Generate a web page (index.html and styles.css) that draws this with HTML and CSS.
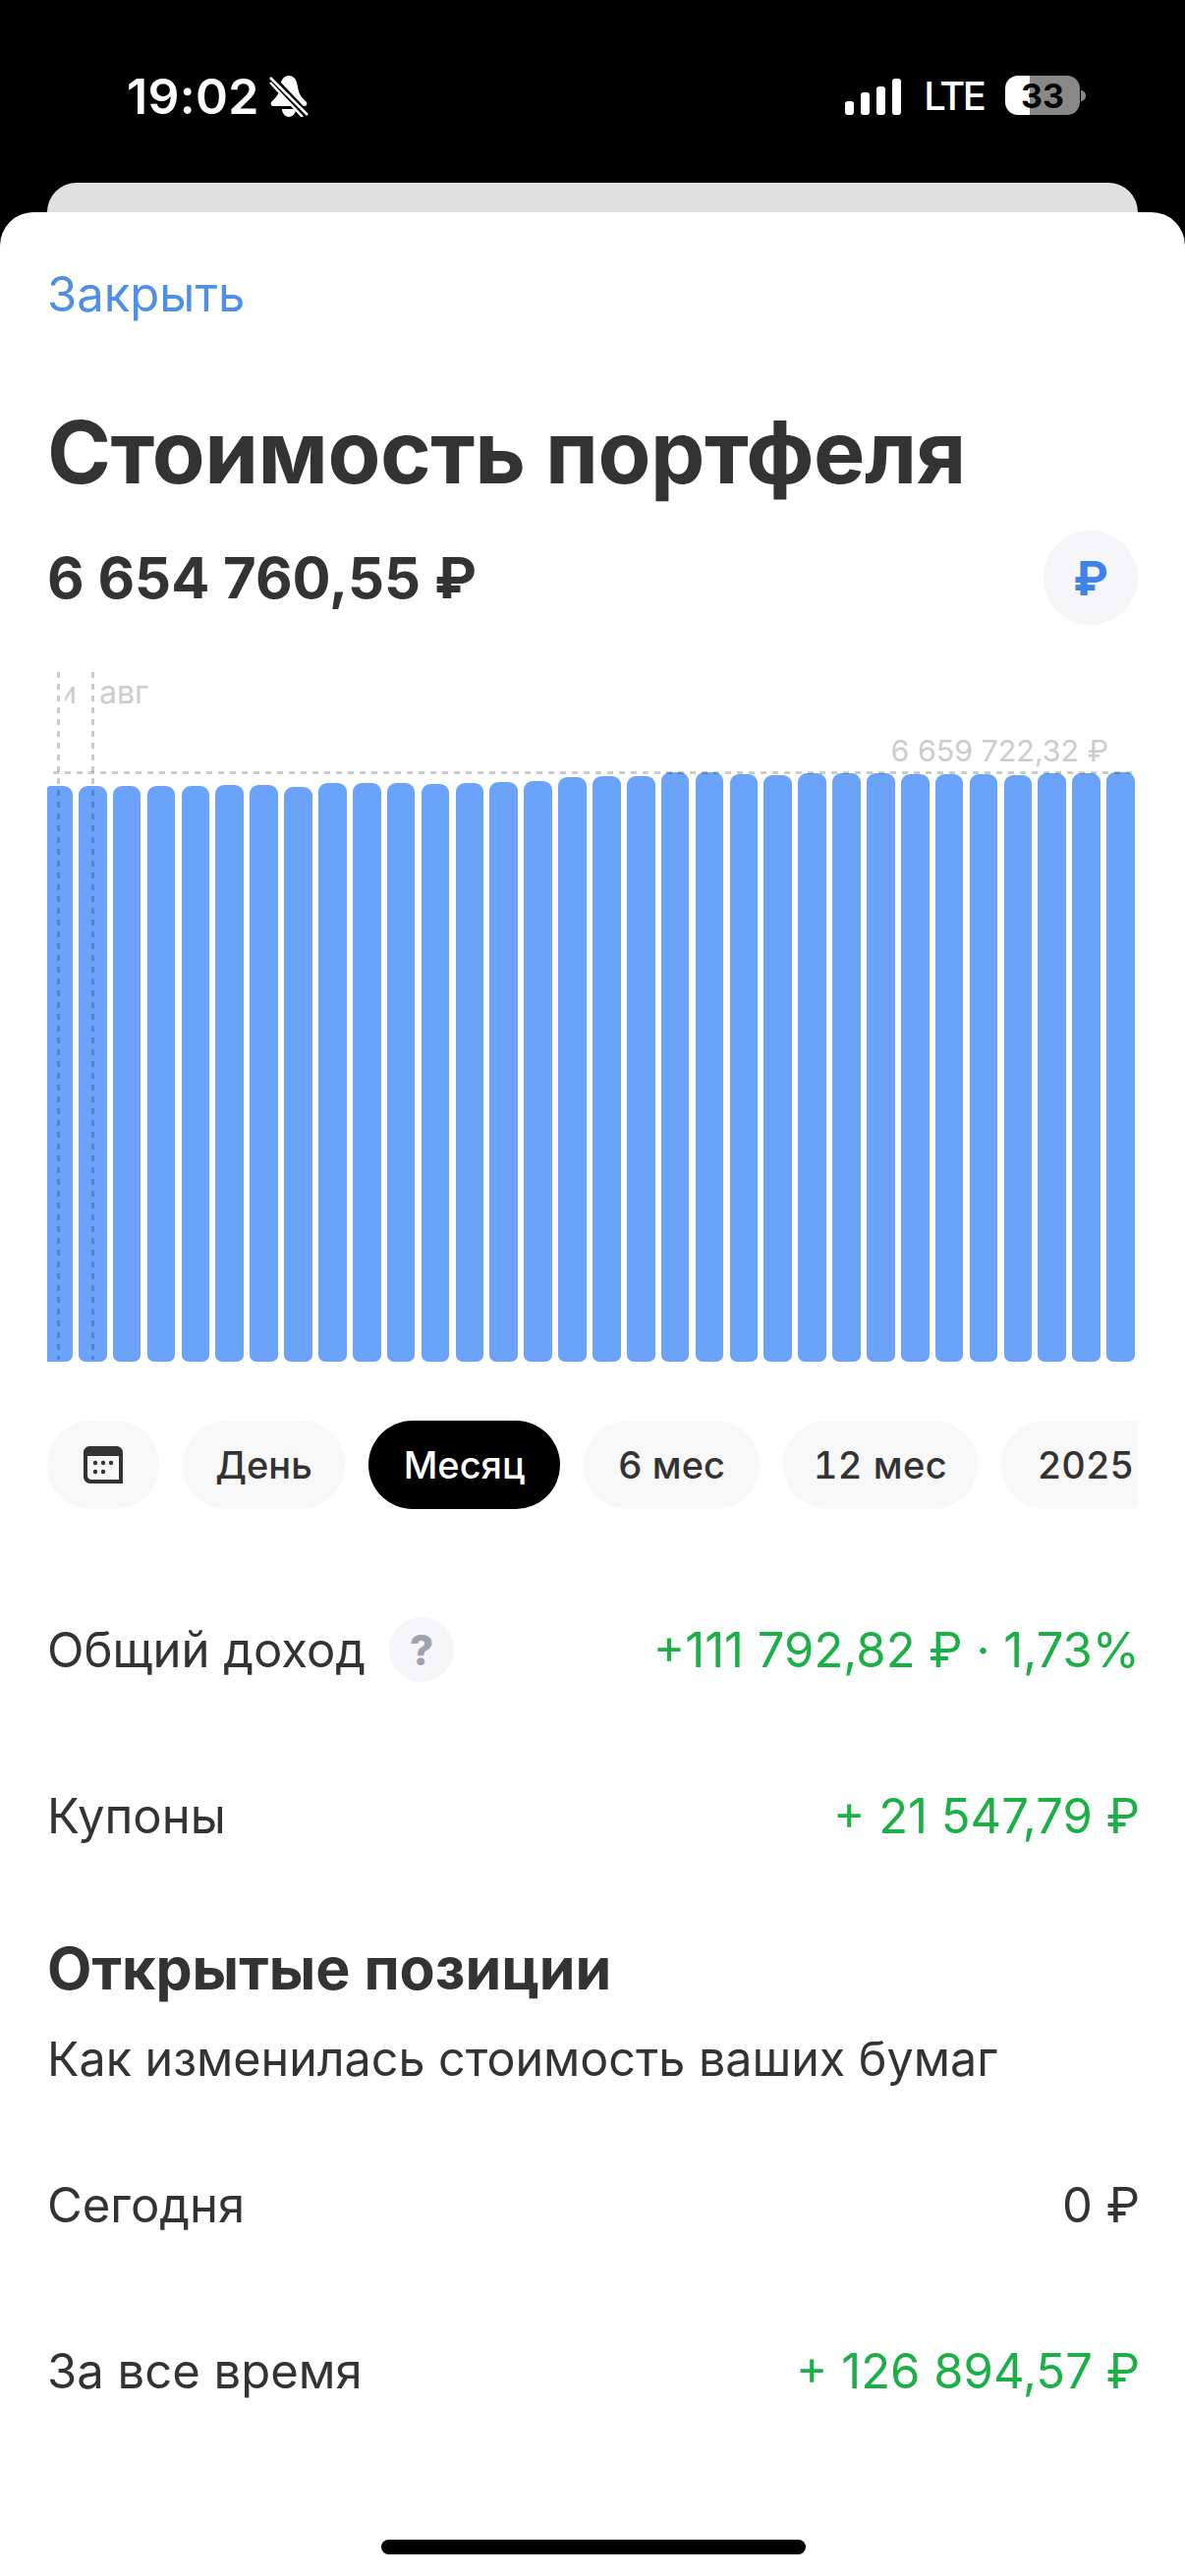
FILE: index.html
```html
<!DOCTYPE html>
<html lang="ru">
  <head>
    <meta charset="utf-8">
    <link rel="stylesheet" href="styles.css">
  </head>
  <body>
    <div class="status-bar">
      <div class="status-left">
        <span class="status-time">19:02</span>
        <svg class="bell-icon" width="40" height="42" viewBox="0 0 40 42">
          <path d="M20 0c4 0 7 3 8 7l2 9c1 4 5 8 8 11 1 2 0 4-2 4H4c-2 0-3-2-2-4 3-3 7-7 8-11l2-9c1-4 4-7 8-7z" fill="#fff"/>
          <path d="M13 34h14c0 4-3 8-7 8s-7-4-7-8z" fill="#fff"/>
          <path d="M1 2l37 39" stroke="#000" stroke-width="9"/>
          <path d="M1 2l38 38M1 7l33 35" stroke="#fff" stroke-width="2.5"/>
        </svg>
      </div>
      <div class="status-right">
        <div class="signal">
          <i class="signal-1"></i>
          <i class="signal-2"></i>
          <i class="signal-3"></i>
          <i class="signal-4"></i>
        </div>
        <span class="status-lte">LTE</span>
        <div class="battery"><span class="battery-level">33</span></div>
        <i class="battery-nub"></i>
      </div>
    </div>
    <div class="back-card"></div>
    <div class="sheet">
      <div class="close-link">Закрыть</div>
      <h1 class="sheet-title">Стоимость портфеля</h1>
      <div class="amount-row">
        <span class="amount">6 654 760,55 ₽</span>
        <span class="currency-button">₽</span>
      </div>

      <div class="chart">
        <div class="bar bar-first" style="height: 586px"></div>
        <div class="bar" style="height: 586px"></div>
        <div class="bar" style="height: 586px"></div>
        <div class="bar" style="height: 586px"></div>
        <div class="bar" style="height: 586px"></div>
        <div class="bar" style="height: 587px"></div>
        <div class="bar" style="height: 587px"></div>
        <div class="bar" style="height: 585px"></div>
        <div class="bar" style="height: 589px"></div>
        <div class="bar" style="height: 589px"></div>
        <div class="bar" style="height: 589px"></div>
        <div class="bar" style="height: 588px"></div>
        <div class="bar" style="height: 589px"></div>
        <div class="bar" style="height: 590px"></div>
        <div class="bar" style="height: 591px"></div>
        <div class="bar" style="height: 595px"></div>
        <div class="bar" style="height: 596px"></div>
        <div class="bar" style="height: 596px"></div>
        <div class="bar" style="height: 600px"></div>
        <div class="bar" style="height: 600px"></div>
        <div class="bar" style="height: 598px"></div>
        <div class="bar" style="height: 597px"></div>
        <div class="bar" style="height: 599px"></div>
        <div class="bar" style="height: 599px"></div>
        <div class="bar" style="height: 599px"></div>
        <div class="bar" style="height: 598px"></div>
        <div class="bar" style="height: 598px"></div>
        <div class="bar" style="height: 598px"></div>
        <div class="bar" style="height: 597px"></div>
        <div class="bar" style="height: 599px"></div>
        <div class="bar" style="height: 599px"></div>
        <div class="bar" style="height: 600px"></div>

        <i class="grid-line grid-line-july"></i>
        <i class="grid-line grid-line-aug"></i>
        <i class="max-line"></i>
        <span class="chart-label label-july"><span>и</span></span>
        <span class="chart-label label-aug">авг</span>
        <span class="chart-label label-max">6 659 722,32 ₽</span>
      </div>

      <div class="periods">
        <div class="pill pill-icon">
          <svg width="40" height="38" viewBox="0 0 40 38">
            <path d="M6 0h28c3 0 6 3 6 6v32H7c-4 0-7-3-7-7V6c0-3 3-6 6-6z" fill="#333"/>
            <path d="M4 10h32v24H8c-2 0-4-2-4-4z" fill="#f8f8f8"/>
            <circle cx="12" cy="17" r="2.2" fill="#333"/>
            <circle cx="20" cy="17" r="2.2" fill="#333"/>
            <circle cx="28" cy="17" r="2.2" fill="#333"/>
            <circle cx="12" cy="26" r="2.2" fill="#333"/>
            <circle cx="20" cy="26" r="2.2" fill="#333"/>
          </svg>
        </div>
        <div class="pill pill-day">День</div>
        <div class="pill pill-month pill-active">Месяц</div>
        <div class="pill pill-half">6 мес</div>
        <div class="pill pill-year">12 мес</div>
        <div class="pill pill-date">2025</div>
      </div>

      <div class="stats stats-income">
        <div class="stat-row">
          <div class="stat-label">
            <span>Общий доход</span>
            <span class="help-button">?</span>
          </div>
          <span class="stat-value positive">+111 792,82 ₽ · 1,73%</span>
        </div>
        <div class="stat-row">
          <span>Купоны</span>
          <span class="stat-value positive">+ 21 547,79 ₽</span>
        </div>
      </div>

      <h2 class="section-title">Открытые позиции</h2>
      <p class="section-text">Как изменилась стоимость ваших бумаг</p>

      <div class="stats stats-positions">
        <div class="stat-row">
          <span>Сегодня</span>
          <span class="stat-value">0 ₽</span>
        </div>
        <div class="stat-row">
          <span>За все время</span>
          <span class="stat-value positive">+ 126 894,57 ₽</span>
        </div>
      </div>

      <div class="home-indicator"></div>
    </div>
  </body>
</html>
```

FILE: styles.css
```css
:root {
  --text-color: #333333;
  --muted-color: #cccccc;
  --link-color: #4f8fe6;
  --accent-color: #3f82ea;
  --bar-color: #6ba3fb;
  --pill-bg: #f8f8f8;
  --circle-bg: #f6f6f8;
  --green-color: #1bb045;
}

* {
  box-sizing: border-box;
}

html,
body {
  margin: 0;
  height: 2622px;
  overflow: hidden;
}

body {
  display: flex;
  flex-direction: column;
  background-color: #000000;
  color: var(--text-color);
  font-family: Inter, "Noto Sans", sans-serif;
}

.status-bar {
  height: 186px;
  padding: 77px 101px 0 129px;
  display: flex;
  justify-content: space-between;
  align-items: flex-start;
  color: #ffffff;
}

.status-left {
  display: flex;
  align-items: center;
  gap: 10px;
  height: 42px;
}

.status-time {
  font-size: 50px;
  font-weight: 600;
  letter-spacing: 0.3px;
}

.status-right {
  display: flex;
  align-items: center;
  height: 40px;
}

.signal {
  display: flex;
  align-items: flex-end;
  gap: 7px;
  height: 37px;
  margin-top: 2px;
}

.signal i {
  display: block;
  width: 9px;
  border-radius: 3px;
  background-color: #ffffff;
}

.signal-1 {
  height: 14px;
}

.signal-2 {
  height: 23px;
}

.signal-3 {
  height: 29px;
}

.signal-4 {
  height: 37px;
}

.status-lte {
  margin-left: 23px;
  font-size: 40px;
  font-weight: 500;
  letter-spacing: -2.8px;
}

.battery {
  width: 76px;
  height: 40px;
  margin-left: 22px;
  display: flex;
  align-items: center;
  justify-content: center;
  border-radius: 13px;
  background: linear-gradient(to right, #ffffff 33%, #888888 33%);
}

.battery-level {
  color: #000000;
  font-size: 34px;
  font-weight: 700;
}

.battery-nub {
  display: block;
  width: 5px;
  height: 11px;
  margin-left: 1px;
  border-radius: 0 5px 5px 0;
  background-color: #888888;
}

.back-card {
  height: 60px;
  margin: 0 48px -30px;
  border-radius: 30px 30px 0 0;
  background-color: #e0e0e0;
}

.sheet {
  position: relative;
  flex: 1;
  display: flex;
  flex-direction: column;
  padding: 54px 48px 0;
  border-radius: 34px 34px 0 0;
  background-color: #ffffff;
}

.close-link {
  height: 60px;
  line-height: 60px;
  font-size: 49px;
  color: var(--link-color);
}

.sheet-title {
  height: 100px;
  margin: 80px 0 0;
  line-height: 100px;
  font-size: 88px;
  font-weight: 700;
  letter-spacing: -0.5px;
}

.amount-row {
  display: flex;
  justify-content: space-between;
  align-items: center;
  height: 96px;
  margin-top: 30px;
}

.amount {
  font-size: 58px;
  font-weight: 700;
}

.currency-button {
  width: 96px;
  height: 96px;
  display: flex;
  align-items: center;
  justify-content: center;
  border-radius: 50%;
  background-color: var(--circle-bg);
  color: var(--accent-color);
  font-size: 48px;
  font-weight: 700;
}

.chart {
  position: relative;
  height: 702px;
  margin: 48px 3px 0 0;
  display: flex;
  align-items: flex-end;
  gap: 6.3px;
}

.bar {
  flex: 1;
  border-radius: 9px 9px 7px 7px;
  background-color: var(--bar-color);
}

.bar-first {
  flex: 0 0 25.7px;
  border-radius: 3px 9px 7px 0;
}

.grid-line {
  position: absolute;
  top: 0;
  bottom: 2px;
  width: 3px;
  background-image: repeating-linear-gradient(
    to bottom,
    rgba(0, 0, 0, 0.2) 0,
    rgba(0, 0, 0, 0.2) 6px,
    transparent 6px,
    transparent 12px
  );
}

.grid-line-july {
  left: 10px;
}

.grid-line-aug {
  left: 45px;
}

.max-line {
  position: absolute;
  top: 101px;
  left: 6px;
  right: 0;
  height: 3px;
  background-image: repeating-linear-gradient(
    to right,
    rgba(0, 0, 0, 0.2) 0,
    rgba(0, 0, 0, 0.2) 6px,
    transparent 6px,
    transparent 12px
  );
}

.chart-label {
  position: absolute;
  color: var(--muted-color);
  font-size: 30.4px;
  line-height: 36px;
}

.label-july {
  top: 3px;
  left: 18px;
  width: 12px;
  overflow: hidden;
  white-space: nowrap;
}

.label-july span {
  margin-left: -6px;
}

.label-aug {
  top: 3px;
  left: 53px;
  font-size: 32px;
}

.label-max {
  top: 62px;
  right: 27px;
}

.periods {
  display: flex;
  gap: 24px;
  height: 90px;
  margin-top: 60px;
  overflow: hidden;
}

.pill {
  flex-shrink: 0;
  display: flex;
  align-items: center;
  justify-content: center;
  border-radius: 45px;
  background-color: var(--pill-bg);
  font-size: 38px;
  font-weight: 500;
  font-variant-numeric: tabular-nums;
}

.pill-icon {
  width: 114px;
}

.pill-day {
  width: 165px;
}

.pill-month {
  width: 195px;
}

.pill-half {
  width: 179px;
}

.pill-year {
  width: 198px;
  letter-spacing: 0.5px;
}

.pill-date {
  width: 172px;
}

.pill-active {
  background-color: #000000;
  color: #ffffff;
}

.stats {
  display: flex;
  flex-direction: column;
  gap: 69px;
}

.stats-income {
  margin-top: 93px;
}

.stats-positions {
  margin-top: 58px;
}

.stat-row {
  display: flex;
  justify-content: space-between;
  align-items: center;
  height: 100px;
  font-size: 49px;
}

.stat-label {
  display: flex;
  align-items: center;
  gap: 24px;
}

.help-button {
  width: 66px;
  height: 66px;
  display: flex;
  align-items: center;
  justify-content: center;
  border-radius: 50%;
  background-color: var(--circle-bg);
  color: #a0a2aa;
  font-size: 42px;
  font-weight: 800;
}

.stat-value {
  margin-right: -2px;
  white-space: nowrap;
}

.positive {
  color: var(--green-color);
}

.section-title {
  height: 80px;
  margin: 66px 0 0;
  line-height: 80px;
  font-size: 59px;
  font-weight: 700;
}

.section-text {
  height: 80px;
  margin: 12px 0 0;
  line-height: 80px;
  font-size: 48.4px;
}

.home-indicator {
  position: absolute;
  left: 388px;
  bottom: 22px;
  width: 432px;
  height: 15px;
  border-radius: 8px;
  background-color: #000000;
}
```
